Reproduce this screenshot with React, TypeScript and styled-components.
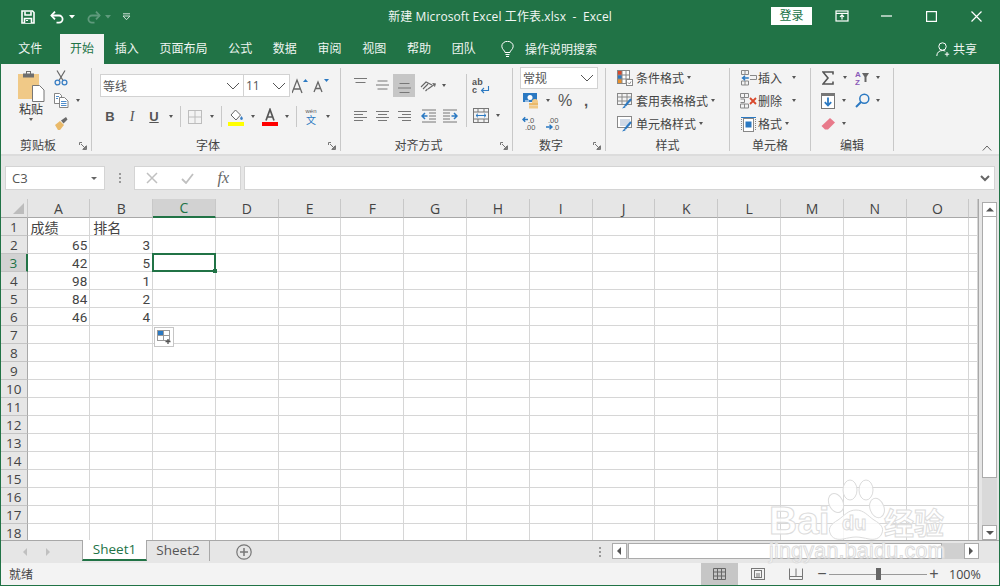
import styled, { createGlobalStyle } from 'styled-components'

const GREEN = '#217346'
const UI_FONT = '"Open Sans", "Noto Sans CJK SC", sans-serif'

const Global = createGlobalStyle`
  html, body { margin: 0; padding: 0; background: #fff; }
  body { font-family: ${UI_FONT}; color: #444; overflow: hidden; }
  * { box-sizing: border-box; }
`

const Shell = styled.div`
  position: relative;
  width: 1000px;
  height: 586px;
  display: flex;
  flex-direction: column;
  border: 1px solid ${GREEN};
  border-width: 0 1px 1px 1px;
  overflow: hidden;
`

/* title bar */
const TitleBar = styled.div`
  height: 34px;
  flex: none;
  display: grid;
  grid-template-columns: 1fr auto 1fr;
  align-items: center;
  background: ${GREEN};
  color: #fff;
`
const Qat = styled.div`
  display: flex;
  align-items: center;
  padding-left: 15px;
`
const QatBtn = styled.span<{ $w: number; $ml?: number }>`
  display: inline-flex;
  align-items: center;
  justify-content: center;
  width: ${p => p.$w}px;
  margin-left: ${p => p.$ml ?? 0}px;
  height: 24px;
`
const DocTitle = styled.div`
  font-size: 12px;
  letter-spacing: 0.1px;
  color: #f2f7f4;
  white-space: pre;
  padding-bottom: 2px;
`
const WinControls = styled.div`
  display: flex;
  align-items: center;
  justify-content: flex-end;
`
const LoginBtn = styled.button`
  width: 41px;
  height: 18px;
  margin: 0 7px 2px 0;
  padding: 0;
  border: none;
  background: #fff;
  color: ${GREEN};
  font: 12px ${UI_FONT};
  line-height: 18px;
`
const WinBtn = styled.span`
  width: 45px;
  height: 34px;
  display: inline-flex;
  align-items: center;
  justify-content: center;
  padding-bottom: 2px;
`

/* tabs */
const TabsBar = styled.div`
  height: 30px;
  flex: none;
  display: flex;
  align-items: flex-end;
  padding-left: 7px;
  background: ${GREEN};
`
const Tab = styled.div<{ $active?: boolean; $mr?: number }>`
  height: 30px;
  line-height: 29px;
  padding: 0 10.35px;
  margin-right: ${p => p.$mr ?? 0}px;
  font-size: 12px;
  white-space: nowrap;
  color: ${p => (p.$active ? GREEN : '#eef5f1')};
  background: ${p => (p.$active ? '#f3f3f3' : 'transparent')};
`
const SearchHint = styled.div`
  display: flex;
  align-items: center;
  height: 30px;
  margin-left: 15px;
  gap: 11px;
  font-size: 12px;
  color: #eef5f1;
`
const ShareBtn = styled.div`
  margin-left: auto;
  display: flex;
  align-items: center;
  height: 30px;
  padding-right: 22px;
  gap: 3px;
  font-size: 12px;
  color: #eef5f1;
`

/* ribbon */
const Ribbon = styled.div`
  height: 92px;
  flex: none;
  display: flex;
  padding-top: 4px;
  background: #f3f3f3;
  border-bottom: 2px solid #dcdcdc;
`
const Group = styled.section<{ $w: number }>`
  width: ${p => p.$w}px;
  height: 83px;
  flex: none;
  display: flex;
  flex-direction: column;
  border-right: 1px solid #c8c8c8;
`
const GroupBody = styled.div<{ $pl?: number; $row?: boolean }>`
  flex: 1;
  min-height: 0;
  display: flex;
  flex-direction: ${p => (p.$row ? 'row' : 'column')};
  padding-left: ${p => p.$pl ?? 0}px;
`
const GroupFoot = styled.div`
  height: 15px;
  flex: none;
  display: flex;
  padding-top: 4px;
`
const GroupLabel = styled.div`
  flex: 1;
  text-align: center;
  font-size: 12px;
  line-height: 12px;
  color: #444;
`
const Launcher = styled.span`
  width: 16px;
  height: 12px;
  display: inline-flex;
  align-items: center;
  justify-content: center;
`
const Rest = styled.div`
  flex: 1;
  display: flex;
  align-items: flex-end;
  justify-content: flex-end;
  padding: 0 7px 3px 0;
`
const ToolRow = styled.div<{ $h?: number; $mt?: number; $pl?: number }>`
  display: flex;
  align-items: center;
  height: ${p => p.$h ?? 23}px;
  margin-top: ${p => p.$mt ?? 0}px;
  padding-left: ${p => p.$pl ?? 0}px;
  font-size: 12px;
  white-space: nowrap;
`
const Tool = styled.span<{ $w?: number; $on?: boolean; $ml?: number }>`
  flex: none;
  display: inline-flex;
  align-items: center;
  justify-content: center;
  width: ${p => p.$w ?? 22}px;
  height: 23px;
  margin-left: ${p => p.$ml ?? 0}px;
  background: ${p => (p.$on ? '#c6c6c6' : 'transparent')};
`
const Caret = styled.span<{ $w?: number; $ml?: number }>`
  flex: none;
  display: inline-flex;
  align-items: center;
  justify-content: center;
  width: ${p => p.$w ?? 10}px;
  margin-left: ${p => p.$ml ?? 0}px;
  &::before {
    content: '';
    border-left: 2.5px solid transparent;
    border-right: 2.5px solid transparent;
    border-top: 3px solid #555;
  }
`
const ToolSep = styled.span`
  width: 1px;
  height: 21px;
  margin: 0 3px;
  background: #c8c8c8;
  flex: none;
`
const Glyph = styled.span<{ $bold?: boolean; $italic?: boolean; $under?: boolean; $size?: number; $family?: string }>`
  font-family: ${p => p.$family ?? '"Liberation Sans", sans-serif'};
  font-size: ${p => p.$size ?? 13}px;
  font-weight: ${p => (p.$bold ? 700 : 400)};
  font-style: ${p => (p.$italic ? 'italic' : 'normal')};
  text-decoration: ${p => (p.$under ? 'underline' : 'none')};
  color: #555;
  line-height: 1;
`
const Combo = styled.div<{ $w: number; $h?: number; $ml?: number }>`
  width: ${p => p.$w}px;
  height: ${p => p.$h ?? 23}px;
  margin-left: ${p => p.$ml ?? 0}px;
  flex: none;
  display: flex;
  align-items: center;
  justify-content: space-between;
  padding: 0 3px 0 2px;
  background: #fff;
  border: 1px solid #d2d2d2;
  font-size: 12px;
  color: #555;
`
const ClipPaste = styled.div`
  width: 42px;
  margin-left: 9px;
  display: flex;
  flex-direction: column;
  align-items: center;
  padding-top: 3px;
  font-size: 12px;
  line-height: 16px;
  color: #333;
`
const ClipTools = styled.div`
  display: flex;
  flex-direction: column;
  margin-top: -2px;
`
const AlignLeft = styled.div`
  width: 125px;
  flex: none;
  padding: 6px 0 0 8px;
`
const AlignRight = styled.div`
  flex: 1;
  height: 53px;
  margin-top: 6px;
  border-left: 1px solid #c8c8c8;
`
const ListText = styled.span<{ $ml?: number }>`
  color: #444;
  font-size: 12px;
  margin-left: ${p => p.$ml ?? 0}px;
`
const Pinyin = styled.span`
  display: flex;
  flex-direction: column;
  align-items: center;
  font-family: "Liberation Sans", sans-serif;
  font-size: 6px;
  line-height: 7px;
  color: #555;
`
const PinyinHan = styled.span`
  font-family: ${UI_FONT};
  font-size: 10px;
  line-height: 10px;
  color: #2b79c2;
`

/* formula bar */
const FormulaBar = styled.div`
  height: 43px;
  flex: none;
  display: flex;
  align-items: flex-start;
  padding: 10px 4px 0 4px;
  background: #e6e6e6;
`
const NameBox = styled.div`
  width: 100px;
  height: 24px;
  display: flex;
  align-items: center;
  justify-content: space-between;
  padding: 0 7px 0 6px;
  background: #fff;
  border: 1px solid #d4d4d4;
  font-size: 13px;
  color: #555;
  &::after {
    content: '';
    border-left: 3px solid transparent;
    border-right: 3px solid transparent;
    border-top: 3px solid #666;
  }
`
const Dots = styled.div`
  width: 29px;
  height: 24px;
  display: flex;
  flex-direction: column;
  align-items: center;
  justify-content: center;
  gap: 2px;
  i { width: 2px; height: 2px; background: #999; display: block; }
`
const FxBox = styled.div`
  width: 107px;
  height: 24px;
  display: flex;
  align-items: center;
  justify-content: space-between;
  padding: 0 11px 0 11px;
  background: #fff;
  border: 1px solid #d4d4d4;
`
const FxLabel = styled.span`
  font: italic 16px "Liberation Serif", serif;
  color: #666;
`
const FormulaInput = styled.div`
  flex: 1;
  height: 24px;
  margin-left: 3px;
  display: flex;
  align-items: center;
  justify-content: flex-end;
  padding-right: 4px;
  background: #fff;
  border: 1px solid #d4d4d4;
`

/* sheet */
const SheetArea = styled.div`
  height: 341px;
  flex: none;
  display: flex;
  background: #e6e6e6;
`
const Viewport = styled.div`
  position: relative;
  width: 978px;
  flex: none;
  overflow: hidden;
  background: #fff;
  border-right: 1px solid #a8a8a8;
`
const Grid = styled.div`
  display: grid;
  grid-template-columns: 26.5px repeat(15, 62.8px) 1fr;
  grid-auto-rows: 18px;
  grid-template-rows: 19px;
`
const CornerCell = styled.div`
  position: relative;
  background: #e6e6e6;
  border-bottom: 1px solid #a8a8a8;
  border-right: 1px solid #c8c8c8;
  &::after {
    content: '';
    position: absolute;
    right: 3px;
    bottom: 3px;
    border-left: 11px solid transparent;
    border-bottom: 11px solid #bcbcbc;
  }
`
const ColHead = styled.div<{ $sel?: boolean }>`
  display: flex;
  align-items: center;
  justify-content: center;
  font-size: 14px;
  background: ${p => (p.$sel ? '#d2d2d2' : '#e6e6e6')};
  color: ${p => (p.$sel ? GREEN : '#444')};
  border-right: 1px solid #c8c8c8;
  border-bottom: ${p => (p.$sel ? `2px solid ${GREEN}` : '1px solid #a8a8a8')};
`
const RowHead = styled.div<{ $sel?: boolean }>`
  display: flex;
  align-items: center;
  justify-content: center;
  font-size: 13.5px;
  background: ${p => (p.$sel ? '#d2d2d2' : '#e6e6e6')};
  color: ${p => (p.$sel ? GREEN : '#444')};
  border-bottom: 1px solid #c4c4c4;
  border-right: ${p => (p.$sel ? `2px solid ${GREEN}` : '1px solid #a8a8a8')};
`
const Cell = styled.div<{ $num?: boolean; $sel?: boolean }>`
  position: relative;
  display: flex;
  align-items: center;
  justify-content: ${p => (p.$num ? 'flex-end' : 'flex-start')};
  padding: ${p => (p.$num ? '0 2px' : '0 3px')};
  font-family: ${p => (p.$num ? 'Roboto, sans-serif' : UI_FONT)};
  font-size: ${p => (p.$num ? 13.5 : 14)}px;
  color: #444;
  border-right: 1px solid #d6d6d6;
  border-bottom: 1px solid #d6d6d6;
  ${p =>
    p.$sel &&
    `&::before {
      content: '';
      position: absolute;
      z-index: 2;
      left: -1px;
      top: -1px;
      right: -1px;
      bottom: -1px;
      border: 2px solid ${GREEN};
    }
    &::after {
      content: '';
      position: absolute;
      z-index: 3;
      right: -2px;
      bottom: -2px;
      width: 4px;
      height: 4px;
      background: ${GREEN};
    }`}
`
const PasteOptions = styled.div`
  position: absolute;
  left: 153px;
  top: 128px;
  width: 20px;
  height: 20px;
  display: flex;
  align-items: center;
  justify-content: center;
  background: #fff;
  border: 1px solid #c6c6c6;
`
const VScroll = styled.div`
  flex: 1;
  display: flex;
  flex-direction: column;
  align-items: center;
  padding: 3px 0 0 1px;
`
const ScrollBtn = styled.div`
  width: 15px;
  height: 15px;
  flex: none;
  display: flex;
  align-items: center;
  justify-content: center;
  background: #fff;
  border: 1px solid #ababab;
`
const VThumb = styled.div`
  width: 15px;
  height: 261px;
  background: #fff;
  border: 1px solid #ababab;
  border-top: none;
`
const VTrack = styled.div`
  width: 15px;
  flex: 1;
  background: #d9d9d9;
`

/* sheet tabs */
const SheetBar = styled.div`
  height: 23px;
  flex: none;
  display: flex;
  align-items: flex-start;
  background: #e6e6e6;
  border-top: 1px solid #a8a8a8;
`
const TabNav = styled.div`
  width: 81px;
  height: 21px;
  display: flex;
  align-items: center;
  gap: 15px;
  padding-left: 21px;
`
const SheetTab = styled.div<{ $active?: boolean; $w: number }>`
  width: ${p => p.$w}px;
  height: 21px;
  margin-top: -1px;
  padding-bottom: 2px;
  display: flex;
  align-items: center;
  justify-content: center;
  font-size: 13.5px;
  color: ${p => (p.$active ? GREEN : '#555')};
  background: ${p => (p.$active ? '#fff' : 'transparent')};
  border-left: ${p => (p.$active ? '1px solid #a8a8a8' : 'none')};
  border-right: 1px solid #a8a8a8;
  border-bottom: ${p => (p.$active ? `2px solid ${GREEN}` : 'none')};
`
const AddSheet = styled.div`
  margin-left: 26px;
  height: 21px;
  display: flex;
  align-items: center;
`
const BarDots = styled(Dots)`
  margin-left: auto;
  height: 21px;
  width: 14px;
  margin-right: 5px;
`
const HScroll = styled.div`
  width: 367px;
  height: 16px;
  margin: 2px 20px 0 0;
  display: flex;
  background: #d0d0d0;
`
const HBtn = styled.div`
  width: 15px;
  flex: none;
  display: flex;
  align-items: center;
  justify-content: center;
  background: #fff;
  border: 1px solid #ababab;
`
const HThumb = styled.div`
  width: 314px;
  margin-left: 1px;
  background: #fff;
  border: 1px solid #ababab;
`
const HTrack = styled.div`
  flex: 1;
`

/* status bar */
const StatusBar = styled.div`
  height: 22px;
  flex: none;
  display: flex;
  align-items: center;
  background: #f3f3f3;
  font-size: 12px;
  color: #444;
  padding-left: 8px;
`
const ViewBtn = styled.span<{ $on?: boolean; $first?: boolean }>`
  width: 37px;
  height: 22px;
  margin-left: ${p => (p.$first ? 'auto' : '1px')};
  display: inline-flex;
  align-items: center;
  justify-content: center;
  background: ${p => (p.$on ? '#c6c6c6' : 'transparent')};
`
const ZoomBar = styled.div`
  display: flex;
  align-items: center;
  margin-left: 3px;
`
const ZoomTrack = styled.div`
  position: relative;
  width: 98px;
  height: 1px;
  margin: 0 2px;
  background: #999;
`
const ZoomKnob = styled.span`
  position: absolute;
  left: 47px;
  top: -6px;
  width: 5px;
  height: 12px;
  background: #666;
`
const ZoomSign = styled.span`
  font: 16px "Liberation Sans", sans-serif;
  width: 10px;
  text-align: center;
  color: #555;
`
const ZoomValue = styled.span`
  width: 33px;
  margin: 0 17px 0 10px;
  font-size: 12.5px;
  color: #444;
`

/* watermark */
const Watermark = styled.svg`
  position: absolute;
  left: 760px;
  top: 474px;
  overflow: visible;
`

/* icons */
const SaveIcon = () => (
  <svg width="14" height="14" viewBox="0 0 14 14" fill="none" stroke="#fff" strokeWidth="1.6">
    <path d="M1 1h10.5L13 2.5V13H1z" />
    <path d="M4 1.5v3.500h6V1.500" />
    <path d="M3.500 13V8.500h7V13" fill="#217346" />
    <path d="M5 10.500h2" strokeWidth="1.2" />
  </svg>
)
const UndoIcon = ({ dim }: { dim?: boolean }) => (
  <svg width="15" height="14" viewBox="0 0 15 14" fill="none" stroke={dim ? '#5f9a7c' : '#fff'} strokeWidth="1.8">
    <g transform={dim ? 'matrix(-1 0 0 1 15 0)' : undefined}>
      <path d="M1.500 5.500H9a3.600 3.600 0 0 1 0 7.200H6.500" />
      <path d="M5 1.600 1.400 5.500 5 9.400" />
    </g>
  </svg>
)
const TinyDown = ({ color = '#fff' }: { color?: string }) => (
  <svg width="6" height="4" viewBox="0 0 6 4"><path d="M0 0h6L3 3.500z" fill={color} /></svg>
)
const CustomizeIcon = () => (
  <svg width="9" height="8" viewBox="0 0 9 8" fill="none" stroke="#cfe2d8" strokeWidth="1">
    <path d="M1 .8h7" />
    <path d="M1 3l3.500 3.700L8 3z" />
  </svg>
)
const RibbonModeIcon = () => (
  <svg width="14" height="12" viewBox="0 0 14 12" fill="none" stroke="#fff" strokeWidth="1.2">
    <rect x="1" y="1" width="12" height="10" />
    <path d="M1 3.400h12" />
    <path d="M7 9.500V5M5 6.800l2-2 2 2" />
  </svg>
)
const MinIcon = () => (
  <svg width="11" height="2" viewBox="0 0 11 2"><path d="M0 1h11" stroke="#fff" strokeWidth="1.2" /></svg>
)
const MaxIcon = () => (
  <svg width="11" height="11" viewBox="0 0 11 11"><rect x=".6" y=".6" width="9.8" height="9.8" fill="none" stroke="#fff" strokeWidth="1.2" /></svg>
)
const CloseIcon = () => (
  <svg width="11" height="11" viewBox="0 0 11 11"><path d="M.5.5l10 10M10.500.5l-10 10" stroke="#fff" strokeWidth="1.2" /></svg>
)
const BulbIcon = () => (
  <svg width="13" height="17" viewBox="0 0 13 17" fill="none" stroke="#fff" strokeWidth="1">
    <path d="M4 11.500c0-2-3.200-3-3.200-6.300a5.700 4.900 0 0 1 11.400 0c0 3.300-3.200 4.300-3.200 6.300z" />
    <path d="M4.500 13.500h4M5 15.500h3" />
  </svg>
)
const PersonIcon = () => (
  <svg width="14" height="15" viewBox="0 0 14 15" fill="none" stroke="#fff" strokeWidth="1">
    <circle cx="6.500" cy="4.500" r="3.700" />
    <path d="M.8 14c0-3.500 2.400-5.500 5.700-5.500 1 0 2 .2 2.800.6" />
    <path d="M11 10v4.500M8.800 12.200h4.400" />
  </svg>
)
const LauncherIcon = () => (
  <svg width="8" height="8" viewBox="0 0 8 8" fill="none" stroke="#777" strokeWidth="1">
    <path d="M7.500 3.500v4h-4" />
    <path d="M.5 3V.5H3M2 2l4.500 4.500M6.500 4v2.500H4" />
  </svg>
)
const ChevronIcon = () => (
  <svg width="14" height="8" viewBox="0 0 14 8" fill="none" stroke="#555" strokeWidth="1"><path d="M1 1l6 6 6-6" /></svg>
)
const ChevronUp = () => (
  <svg width="10" height="6" viewBox="0 0 10 6" fill="none" stroke="#666" strokeWidth="1"><path d="M.8 5.500 5 1l4.200 4.500" /></svg>
)
const PasteIcon = () => (
  <svg width="28" height="31" viewBox="0 0 28 31">
    <rect x="1" y="3" width="21" height="25" fill="#f0c987" />
    <rect x="6" y="2.500" width="11" height="4" fill="#6e6e6e" />
    <rect x="9.500" y="0.500" width="4" height="3" fill="none" stroke="#6e6e6e" />
    <path d="M15.500 14.500h7l4.500 4.500v11.500h-11.500z" fill="#fff" stroke="#777" />
  </svg>
)
const CutIcon = () => (
  <svg width="14" height="16" viewBox="0 0 14 16" fill="none">
    <path d="M3 .5l6 10M11 .5l-6 10" stroke="#666" strokeWidth="1.2" />
    <circle cx="3.500" cy="12.500" r="2.400" stroke="#3a7fc4" strokeWidth="1.300" />
    <circle cx="10.500" cy="12.500" r="2.400" stroke="#3a7fc4" strokeWidth="1.300" />
  </svg>
)
const CopyIcon = () => (
  <svg width="15" height="15" viewBox="0 0 15 15" fill="#fff" stroke="#777" strokeWidth=".9">
    <path d="M.5.5h5l2 2v8h-7z" />
    <path d="M5.500 4.500h5l3.500 3.500v6.500h-8.500z" />
    <path d="M7 8.500h5.500M7 10.500h5.500M7 12.500h5.500" stroke="#3a7fc4" />
    <path d="M2 3.500h3M2 5.500h2" stroke="#3a7fc4" />
  </svg>
)
const PainterIcon = () => (
  <svg width="15" height="13" viewBox="0 0 15 13">
    <path d="M1 8l5-4 4 4-4 5H4z" fill="#e9b969" />
    <path d="M7 3.500l2.500 3 4-4L12 0z" fill="#6a6a6a" />
  </svg>
)
const GrowFontIcon = ({ small }: { small?: boolean }) => (
  <svg width="18" height="16" viewBox="0 0 18 16">
    <path d={small ? 'M1 14 5 4l4 10M2.500 10.500h5' : 'M0 15 5 2l5 13M2 11h6'} fill="none" stroke="#666" strokeWidth="1.300" />
    <path d={small ? 'M11 1h5l-2.500 3z' : 'M11 4h5l-2.500-3z'} fill="#2b79c2" />
  </svg>
)
const BorderIcon = () => (
  <svg width="16" height="16" viewBox="0 0 16 16" fill="none" stroke="#bdbdbd" strokeWidth="1"><rect x="1.500" y="1.500" width="13" height="13" /><path d="M8 1.500v13M1.500 8h13" /></svg>
)
const FillIcon = () => (
  <svg width="16" height="18" viewBox="0 0 16 18">
    <path d="M3 7l4.500-5 5 5-4.500 5z" fill="#fff" stroke="#666" />
    <path d="M13.500 8c1 1.400 1.400 2 1.400 2.600a1.400 1.400 0 0 1-2.800 0c0-.6.400-1.200 1.400-2.600z" fill="#3a7fc4" />
    <rect x="0" y="14" width="16" height="4" fill="#ffff00" />
  </svg>
)
const FontColorIcon = () => (
  <svg width="16" height="18" viewBox="0 0 16 18">
    <path d="M4 12.500 8 1.500l4 11M5.500 9h5" fill="none" stroke="#555" strokeWidth="1.700" />
    <rect x="0" y="14" width="16" height="4" fill="#ff0000" />
  </svg>
)
const LINE_PATHS: Record<string, string> = {
  top: 'M1 .5h13M2.500 4.500h10',
  mid: 'M2.500 3h10M1 7h13M2.500 11h10',
  bot: 'M2.500 5.500h10M1 10h13M2.500 14.500h10',
  left: 'M1 3.500h13M1 6.500h9M1 9.500h13M1 12.500h9',
  center: 'M1 3.500h13M3 6.500h9M1 9.500h13M3 12.500h9',
  right: 'M1 3.500h13M5 6.500h9M1 9.500h13M5 12.500h9',
}
const Lines = ({ kind }: { kind: string }) => (
  <svg width="15" height="15" viewBox="0 0 15 15" fill="none" stroke="#777" strokeWidth="1">
    <path d={LINE_PATHS[kind]} />
  </svg>
)
const OrientIcon = () => (
  <svg width="17" height="15" viewBox="0 0 17 15" fill="none" stroke="#666" strokeWidth="1.100">
    <path d="M1 9l5-5 6 3M3 11l5-5M5.500 13l2-2" />
    <path d="M8 11l7-5M12.500 5.500l2.800.4-.8 2.700" stroke="#666" />
  </svg>
)
const IndentIcon = ({ flip }: { flip?: boolean }) => (
  <svg width="15" height="14" viewBox="0 0 15 14" fill="none">
    <g transform={flip ? 'matrix(-1 0 0 1 15 0)' : undefined}>
      <path d="M1 1h14M1 13h14M8 4h7M8 7h7M8 10h7" stroke="#777" />
      <path d="M6.500 7H1.500M4 4 1 7l3 3" stroke="#2b79c2" strokeWidth="1.500" />
    </g>
  </svg>
)
const WrapIcon = () => (
  <svg width="18" height="16" viewBox="0 0 18 16">
    <text x="0" y="7" fontFamily="Liberation Sans, sans-serif" fontSize="9" fontWeight="700" fill="#555" letterSpacing=".3">ab</text>
    <text x="0" y="15" fontFamily="Liberation Sans, sans-serif" fontSize="9" fontWeight="700" fill="#555">c</text>
    <path d="M16.500 8v4.500H9.500M12 10l-2.500 2.500L12 15" fill="none" stroke="#2b79c2" strokeWidth="1.100" />
  </svg>
)
const MergeIcon = () => (
  <svg width="16" height="15" viewBox="0 0 16 15" fill="none" stroke="#777">
    <rect x=".5" y=".5" width="15" height="14" />
    <path d="M.5 4h15M.5 11h15M5 .5V4M5 11v3.500M11 .5V4M11 11v3.500" />
    <path d="M3 7.500h10M5 5.700 3 7.500l2 1.800M11 5.700l2 1.800-2 1.800" stroke="#2b79c2" />
  </svg>
)
const CurrencyIcon = () => (
  <svg width="17" height="16" viewBox="0 0 17 16">
    <rect x="0" y="0" width="14" height="9" fill="#2b79c2" />
    <ellipse cx="7" cy="4.500" rx="2.500" ry="2.500" fill="#fff" />
    <rect x="2" y="7.500" width="4" height="1" fill="#fff" />
    <circle cx="12" cy="9" r="3" fill="#f0c987" />
    <rect x="6" y="10" width="9" height="2.500" fill="#e9b969" />
    <rect x="6" y="13" width="9" height="2.500" fill="#f0c987" />
  </svg>
)
const DecimalIcon = ({ up }: { up?: boolean }) => (
  <svg width="17" height="15" viewBox="0 0 17 15">
    <text x={up ? 3 : 6} y="6.500" fontFamily="Liberation Sans, sans-serif" fontSize="7.500" fill="#555">{up ? '.00' : '.0'}</text>
    <text x={up ? 8 : 3} y="14" fontFamily="Liberation Sans, sans-serif" fontSize="7.500" fill="#555">{up ? '.0' : '.00'}</text>
    {up ? (
      <path d="M7 11H1M4.500 8.800 7 11l-2.500 2.200" fill="none" stroke="#2b79c2" strokeWidth="1.400" />
    ) : (
      <path d="M6 3.500H1M3.200 1.300 1 3.500l2.200 2.200" fill="none" stroke="#2b79c2" strokeWidth="1.400" />
    )}
  </svg>
)
const CondIcon = () => (
  <svg width="16" height="16" viewBox="0 0 16 16" fill="none" stroke="#888">
    <rect x=".5" y=".5" width="12" height="13" fill="#fff" />
    <rect x="1" y="1" width="4" height="4" fill="#d9482b" stroke="none" />
    <rect x="1" y="5" width="4" height="4" fill="#2b79c2" stroke="none" />
    <rect x="1" y="9" width="4" height="4" fill="#e9902b" stroke="none" />
    <path d="M5 .5v13M9 .5v13M.5 5h12M.5 9h12" />
    <rect x="9.500" y="9.500" width="6" height="6" fill="#fff" />
    <path d="M11 12.500l1.500 1.500L14 11.500" />
  </svg>
)
const TableFmtIcon = ({ shade }: { shade?: boolean }) => (
  <svg width="17" height="16" viewBox="0 0 17 16" fill="none" stroke="#888">
    <rect x=".5" y=".5" width="14" height="11" fill={shade ? '#fff' : '#f3f3f3'} />
    {shade ? <rect x="3" y="3" width="10" height="7" fill="#cfd9e6" stroke="none" /> : <path d="M.5 4h14M.5 8h14M5 .5v11M10 .5v11" />}
    <path d="M14 6 8 13" stroke="#2b79c2" strokeWidth="2" />
    <path d="M7.500 12.500 5 15.500l3.500-1z" fill="#2b79c2" stroke="none" />
  </svg>
)
const InsertIcon = () => (
  <svg width="16" height="16" viewBox="0 0 16 16" fill="none" stroke="#888">
    <path d="M.5.500h7v4h-7zM.5 11h7v4h-7zM4 .5v4M4 11v4M9 5.500h6.500v4H9" />
    <path d="M.8 8h7M4 5.800 1.800 8 4 10.200" stroke="#2b79c2" strokeWidth="1.400" />
  </svg>
)
const DeleteIcon = () => (
  <svg width="17" height="16" viewBox="0 0 17 16" fill="none" stroke="#888">
    <path d="M.5.500h8v4h-8zM.5 11h8v4h-8zM4.500.5v4M4.500 11v4M.5 6h4v3.500h-4" />
    <path d="M10 5l6 6M16 5l-6 6" stroke="#d9482b" strokeWidth="1.800" />
  </svg>
)
const CellFmtIcon = () => (
  <svg width="15" height="16" viewBox="0 0 15 16" fill="none" stroke="#888">
    <rect x="2.500" y="2.500" width="10" height="13" fill="#fff" />
    <rect x="4.500" y="5.500" width="6" height="6" fill="#2b79c2" stroke="none" />
    <path d="M0 1.500h15" stroke="#2b79c2" />
    <path d="M.5 3v12M14.500 3v12" strokeDasharray="1 1" />
  </svg>
)
const SumIcon = () => (
  <svg width="12" height="14" viewBox="0 0 12 14"><path d="M11 3.500V1H1l5 6-5 6h10v-2.500" fill="none" stroke="#555" strokeWidth="1.600" /></svg>
)
const SortIcon = () => (
  <svg width="15" height="16" viewBox="0 0 15 16">
    <text x="0" y="7" fontFamily="Liberation Sans, sans-serif" fontSize="8" fontWeight="700" fill="#8a5bb8">A</text>
    <text x="0" y="15" fontFamily="Liberation Sans, sans-serif" fontSize="8" fontWeight="700" fill="#8a5bb8">Z</text>
    <path d="M7 3h7L11.500 7v5h-2V7z" fill="#666" />
  </svg>
)
const FillDownIcon = () => (
  <svg width="14" height="16" viewBox="0 0 14 16">
    <rect x=".5" y=".5" width="13" height="15" fill="#fff" stroke="#777" />
    <rect x="1" y="1" width="12" height="2" fill="#777" />
    <path d="M7 4.500v8M3.800 9.200 7 12.500l3.200-3.300" fill="none" stroke="#2b79c2" strokeWidth="1.800" />
  </svg>
)
const SearchIcon = () => (
  <svg width="15" height="15" viewBox="0 0 15 15" fill="none" stroke="#2b79c2">
    <circle cx="9.300" cy="5.700" r="4.500" strokeWidth="1.500" />
    <path d="M6 9 1 14" strokeWidth="2" />
  </svg>
)
const EraserIcon = () => (
  <svg width="14" height="12" viewBox="0 0 14 12"><path d="M9 0l5 4.500-7 7H4L.5 8z" fill="#e8798a" /></svg>
)
const CrossIcon = () => (
  <svg width="12" height="12" viewBox="0 0 12 12"><path d="M1 1l10 10M11 1 1 11" stroke="#c0c0c0" strokeWidth="1.500" /></svg>
)
const CheckIcon = () => (
  <svg width="13" height="11" viewBox="0 0 13 11"><path d="M1 6l4 4 7-9" fill="none" stroke="#c0c0c0" strokeWidth="1.800" /></svg>
)
const BoldDown = () => (
  <svg width="10" height="7" viewBox="0 0 10 7"><path d="M1 1l4 4 4-4" fill="none" stroke="#666" strokeWidth="2" /></svg>
)
const PasteOptIcon = () => (
  <svg width="14" height="14" viewBox="0 0 14 14" fill="none" stroke="#999">
    <rect x=".5" y=".5" width="12" height="10" />
    <rect x="1" y="1" width="6" height="4" fill="#2b79c2" stroke="none" />
    <path d="M.5 5.500h12M6.500.5v10" />
    <path d="M11 9v5M8.500 11.500h5" stroke="#555" strokeWidth="1.300" />
  </svg>
)
const ArrowTri = ({ dir, color = '#555' }: { dir: 'left' | 'right' | 'up' | 'down'; color?: string }) => {
  const d = { left: 'M5 0v8L1 4z', right: 'M1 0v8l4-4z', up: 'M0 5.500h8L4 1.500z', down: 'M0 2h8L4 6z' }[dir]
  return <svg width="8" height="8" viewBox="0 0 8 8"><path d={d} fill={color} /></svg>
}
const AddCircle = () => (
  <svg width="16" height="16" viewBox="0 0 16 16" fill="none" stroke="#777" strokeWidth="1.200">
    <circle cx="8" cy="8" r="7.200" />
    <path d="M8 4v8M4 8h8" strokeWidth="1.500" />
  </svg>
)
const NormalIcon = () => (
  <svg width="13" height="12" viewBox="0 0 13 12" fill="none" stroke="#666"><path d="M.5.500h12v11H.5zM.5 4h12M.5 8h12M4.500.5v11M8.500.5v11" /></svg>
)
const PageIcon = () => (
  <svg width="14" height="12" viewBox="0 0 14 12" fill="none" stroke="#777"><rect x=".5" y=".5" width="13" height="11" /><rect x="3.500" y="2.500" width="7" height="7" /><path d="M5 6h4M5 8h4" /></svg>
)
const BreakIcon = () => (
  <svg width="14" height="12" viewBox="0 0 14 12" fill="none" stroke="#777"><path d="M.5.500v11h13V.5M.5 8.500h13M7 .5v8" /></svg>
)

const COLS = ['A', 'B', 'C', 'D', 'E', 'F', 'G', 'H', 'I', 'J', 'K', 'L', 'M', 'N', 'O']
const DATA: Record<string, [string, string]> = {
  1: ['成绩', '排名'],
  2: ['65', '3'],
  3: ['42', '5'],
  4: ['98', '1'],
  5: ['84', '2'],
  6: ['46', '4'],
}
const ROWS = Array.from({ length: 18 }, (_, i) => i + 1)

function SheetGrid() {
  return (
    <Grid>
      <CornerCell />
      {COLS.map(c => (
        <ColHead key={c} $sel={c === 'C'}>{c}</ColHead>
      ))}
      <ColHead />
      {ROWS.map(r => (
        <Row key={r} r={r} />
      ))}
    </Grid>
  )
}

function Row({ r }: { r: number }) {
  const vals = DATA[r]
  return (
    <>
      <RowHead $sel={r === 3}>{r}</RowHead>
      {COLS.map((c, i) => {
        const v = vals && i < 2 ? vals[i] : ''
        return (
          <Cell key={c} $num={r > 1 && i < 2} $sel={r === 3 && c === 'C'}>{v}</Cell>
        )
      })}
      <Cell />
    </>
  )
}

export default function App() {
  return (
    <>
      <Global />
      <Shell>
        <TitleBar>
          <Qat>
            <QatBtn $w={24}><SaveIcon /></QatBtn>
            <QatBtn $w={22} $ml={6}><UndoIcon /></QatBtn>
            <QatBtn $w={8}><TinyDown /></QatBtn>
            <QatBtn $w={22} $ml={6}><UndoIcon dim /></QatBtn>
            <QatBtn $w={8}><TinyDown color="#5f9a7c" /></QatBtn>
            <QatBtn $w={16} $ml={6}><CustomizeIcon /></QatBtn>
          </Qat>
          <DocTitle>新建 Microsoft Excel 工作表.xlsx  -  Excel</DocTitle>
          <WinControls>
            <LoginBtn>登录</LoginBtn>
            <WinBtn><RibbonModeIcon /></WinBtn>
            <WinBtn><MinIcon /></WinBtn>
            <WinBtn><MaxIcon /></WinBtn>
            <WinBtn><CloseIcon /></WinBtn>
          </WinControls>
        </TitleBar>

        <TabsBar>
          <Tab $mr={7}>文件</Tab>
          <Tab $active>开始</Tab>
          <Tab>插入</Tab>
          <Tab>页面布局</Tab>
          <Tab>公式</Tab>
          <Tab>数据</Tab>
          <Tab>审阅</Tab>
          <Tab>视图</Tab>
          <Tab>帮助</Tab>
          <Tab>团队</Tab>
          <SearchHint><BulbIcon />操作说明搜索</SearchHint>
          <ShareBtn><PersonIcon />共享</ShareBtn>
        </TabsBar>

        <Ribbon>
          <Group $w={91}>
            <GroupBody $row>
              <ClipPaste>
                <PasteIcon />
                粘贴
                <Caret />
              </ClipPaste>
              <ClipTools>
                <ToolRow><Tool $w={18}><CutIcon /></Tool></ToolRow>
                <ToolRow><Tool $w={18}><CopyIcon /></Tool><Caret $w={16} /></ToolRow>
                <ToolRow><Tool $w={18}><PainterIcon /></Tool></ToolRow>
              </ClipTools>
            </GroupBody>
            <GroupFoot><GroupLabel>剪贴板</GroupLabel><Launcher><LauncherIcon /></Launcher></GroupFoot>
          </Group>

          <Group $w={249}>
            <GroupBody>
              <ToolRow $mt={6} $pl={8}>
                <Combo $w={144}>等线<ChevronIcon /></Combo>
                <Combo $w={47} $ml={-1}>11<ChevronIcon /></Combo>
                <Tool $w={21}><GrowFontIcon /></Tool>
                <Tool $w={21}><GrowFontIcon small /></Tool>
              </ToolRow>
              <ToolRow $mt={8} $pl={7}>
                <Tool><Glyph $bold>B</Glyph></Tool>
                <Tool><Glyph $italic $size={14} $family='"Liberation Serif", serif'>I</Glyph></Tool>
                <Tool><Glyph $bold $under>U</Glyph></Tool>
                <Caret $w={12} />
                <ToolSep />
                <Tool><BorderIcon /></Tool>
                <Caret $w={12} />
                <ToolSep />
                <Tool><FillIcon /></Tool>
                <Caret $w={12} />
                <Tool><FontColorIcon /></Tool>
                <Caret $w={12} />
                <ToolSep />
                <Tool><Pinyin>wén<PinyinHan>文</PinyinHan></Pinyin></Tool>
                <Caret $w={12} />
              </ToolRow>
            </GroupBody>
            <GroupFoot><GroupLabel>字体</GroupLabel><Launcher><LauncherIcon /></Launcher></GroupFoot>
          </Group>

          <Group $w={172}>
            <GroupBody $row>
              <AlignLeft>
                <ToolRow>
                  <Tool><Lines kind="top" /></Tool>
                  <Tool><Lines kind="mid" /></Tool>
                  <Tool $on><Lines kind="bot" /></Tool>
                  <Tool $ml={2}><OrientIcon /></Tool>
                  <Caret />
                </ToolRow>
                <ToolRow $mt={7}>
                  <Tool><Lines kind="left" /></Tool>
                  <Tool><Lines kind="center" /></Tool>
                  <Tool><Lines kind="right" /></Tool>
                  <Tool $ml={2}><IndentIcon /></Tool>
                  <Tool><IndentIcon flip /></Tool>
                </ToolRow>
              </AlignLeft>
              <AlignRight>
                <ToolRow $pl={3}><Tool><WrapIcon /></Tool></ToolRow>
                <ToolRow $mt={7} $pl={3}><Tool><MergeIcon /></Tool><Caret $w={12} /></ToolRow>
              </AlignRight>
            </GroupBody>
            <GroupFoot><GroupLabel>对齐方式</GroupLabel><Launcher><LauncherIcon /></Launcher></GroupFoot>
          </Group>

          <Group $w={93}>
            <GroupBody>
              <ToolRow $h={22} $mt={-1} $pl={7}>
                <Combo $w={78} $h={22}>常规<ChevronIcon /></Combo>
              </ToolRow>
              <ToolRow $pl={6}>
                <Tool $w={24}><CurrencyIcon /></Tool>
                <Caret />
                <Tool $w={24}><Glyph $size={16}>%</Glyph></Tool>
                <Tool $w={18}><Glyph $bold $size={15}>,</Glyph></Tool>
              </ToolRow>
              <ToolRow $pl={6}>
                <Tool><DecimalIcon /></Tool>
                <Tool $w={24}><DecimalIcon up /></Tool>
              </ToolRow>
            </GroupBody>
            <GroupFoot><GroupLabel>数字</GroupLabel><Launcher><LauncherIcon /></Launcher></GroupFoot>
          </Group>

          <Group $w={124}>
            <GroupBody $pl={10}>
              <ToolRow $mt={-2}><Tool $w={18}><CondIcon /></Tool><ListText $ml={2}>条件格式</ListText><Caret /></ToolRow>
              <ToolRow><Tool $w={18}><TableFmtIcon /></Tool><ListText $ml={2}>套用表格格式</ListText><Caret /></ToolRow>
              <ToolRow><Tool $w={18}><TableFmtIcon shade /></Tool><ListText $ml={2}>单元格样式</ListText><Caret /></ToolRow>
            </GroupBody>
            <GroupFoot><GroupLabel>样式</GroupLabel></GroupFoot>
          </Group>

          <Group $w={81}>
            <GroupBody $pl={9}>
              <ToolRow $mt={-2}><Tool $w={19}><InsertIcon /></Tool><ListText>插入</ListText><Caret $ml={7} /></ToolRow>
              <ToolRow><Tool $w={19}><DeleteIcon /></Tool><ListText>删除</ListText><Caret $ml={7} /></ToolRow>
              <ToolRow><Tool $w={19}><CellFmtIcon /></Tool><ListText>格式</ListText><Caret /></ToolRow>
            </GroupBody>
            <GroupFoot><GroupLabel>单元格</GroupLabel></GroupFoot>
          </Group>

          <Group $w={83}>
            <GroupBody $pl={6}>
              <ToolRow $mt={-2}>
                <Tool><SumIcon /></Tool><Caret $w={12} />
                <Tool><SortIcon /></Tool><Caret />
              </ToolRow>
              <ToolRow>
                <Tool><FillDownIcon /></Tool><Caret />
                <Tool $ml={2}><SearchIcon /></Tool><Caret />
              </ToolRow>
              <ToolRow>
                <Tool><EraserIcon /></Tool><Caret />
              </ToolRow>
            </GroupBody>
            <GroupFoot><GroupLabel>编辑</GroupLabel></GroupFoot>
          </Group>

          <Rest><ChevronUp /></Rest>
        </Ribbon>

        <FormulaBar>
          <NameBox>C3</NameBox>
          <Dots><i /><i /><i /></Dots>
          <FxBox><CrossIcon /><CheckIcon /><FxLabel>fx</FxLabel></FxBox>
          <FormulaInput><BoldDown /></FormulaInput>
        </FormulaBar>

        <SheetArea>
          <Viewport>
            <SheetGrid />
            <PasteOptions><PasteOptIcon /></PasteOptions>
          </Viewport>
          <VScroll>
            <ScrollBtn><ArrowTri dir="up" /></ScrollBtn>
            <VThumb />
            <VTrack />
            <ScrollBtn><ArrowTri dir="down" /></ScrollBtn>
          </VScroll>
        </SheetArea>

        <SheetBar>
          <TabNav><ArrowTri dir="left" color="#c0c0c0" /><ArrowTri dir="right" color="#c0c0c0" /></TabNav>
          <SheetTab $active $w={65}>Sheet1</SheetTab>
          <SheetTab $w={63}>Sheet2</SheetTab>
          <AddSheet><AddCircle /></AddSheet>
          <BarDots><i /><i /><i /></BarDots>
          <HScroll>
            <HBtn><ArrowTri dir="left" /></HBtn>
            <HThumb />
            <HTrack />
            <HBtn><ArrowTri dir="right" /></HBtn>
          </HScroll>
        </SheetBar>

        <StatusBar>
          就绪
          <ViewBtn $first $on><NormalIcon /></ViewBtn>
          <ViewBtn><PageIcon /></ViewBtn>
          <ViewBtn><BreakIcon /></ViewBtn>
          <ZoomBar>
            <ZoomSign>−</ZoomSign>
            <ZoomTrack><ZoomKnob /></ZoomTrack>
            <ZoomSign>+</ZoomSign>
          </ZoomBar>
          <ZoomValue>100%</ZoomValue>
        </StatusBar>

        <Watermark width="190" height="92" viewBox="0 0 190 92" fill="#ffffff" fillOpacity=".8" stroke="#dcdcdc" strokeWidth="1">
          <ellipse cx="75" cy="29" rx="7" ry="10" transform="rotate(-25 75 29)" />
          <ellipse cx="89" cy="16" rx="7" ry="10" />
          <ellipse cx="105" cy="16" rx="7" ry="10" />
          <ellipse cx="116" cy="34" rx="7" ry="10" transform="rotate(-20 116 34)" />
          <path d="M95 36c8 0 12 6 18 10 7 4 10 8 8 13-2 6-8 7-13 6-5-1-9-2-13-2-4 0-8 1-13 2-5 1-11 0-13-6-2-5 1-9 8-13 6-4 10-10 18-10z" />
          <text x="8" y="60" fontFamily="Liberation Sans, sans-serif" fontSize="39" fontWeight="700">Bai</text>
          <text x="81" y="56" fontFamily="Liberation Sans, sans-serif" fontSize="20" fontWeight="700">du</text>
          <text x="123" y="60" fontFamily="Noto Sans CJK SC, sans-serif" fontSize="30" fontWeight="700">经验</text>
          <text x="8" y="84" fontFamily="Liberation Sans, sans-serif" fontSize="21.500" letterSpacing=".2">jingyan.baidu.com</text>
        </Watermark>
      </Shell>
    </>
  )
}
